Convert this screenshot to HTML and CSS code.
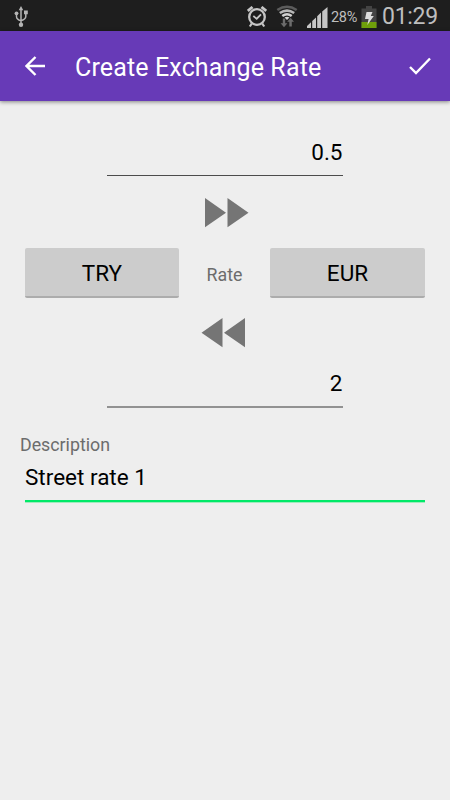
FILE: index.html
```
<!DOCTYPE html>
<html lang="en">
  <head>
    <meta charset="utf-8">
    <title>Create Exchange Rate</title>
    <link rel="stylesheet" href="styles.css">
  </head>
  <body>
    <div class="status-bar">
      <svg class="usb" width="16" height="24" viewBox="0 0 16 24">
        <path d="M7 3v17M2.500 8v2.500q0 3 4.500 4.300M11.800 7.500v3q0 2.500-4.800 4.300" fill="none" stroke="#b4b4b4" stroke-width="1.500"/>
        <path d="M7 0l2.300 4.200H4.700zM10 4.500h3.800v3.800H10z" fill="#b4b4b4"/>
        <circle cx="2.500" cy="7.300" r="1.900" fill="#b4b4b4"/>
        <circle cx="7" cy="18.800" r="2.200" fill="#b4b4b4"/>
      </svg>
      <div class="status-icons">
        <svg class="alarm" width="20" height="22" viewBox="0 0 20 22">
          <g fill="none" stroke="#c6c6c6">
            <circle cx="10" cy="11" r="7.800" stroke-width="2.300"/>
            <path d="M6.300 10l3.400 2.700 4.300-4.400" stroke-width="1.800"/>
            <path d="M.800 5L5.500 1M14.500 1l4.700 4" stroke-width="2.800"/>
            <path d="M4.800 17.500L2.800 20.500M15.200 17.500l2 3" stroke-width="2.200"/>
          </g>
        </svg>
        <svg class="wifi" width="22" height="24" viewBox="0 0 22 24">
          <g fill="none">
            <path d="M1.300 5Q11-1.500 20.700 5" stroke="#5c5c5c" stroke-width="2.600"/>
            <path d="M3.800 8Q11 3.200 18.200 8" stroke="#b8b8b8" stroke-width="2.600"/>
            <path d="M6.300 11Q11 7.400 15.700 11" stroke="#d2d2d2" stroke-width="2.400"/>
          </g>
          <path d="M8.500 12.500Q11 10.800 13.500 12.500L11 15z" fill="#d2d2d2"/>
          <path d="M6.800 13.500h2.400v4.700h2.200L8 22.300l-3.400-4.100h2.200zM13.300 21.500v-4.700h-2.100l3.400-4.100 3.400 4.100h-2.200v4.700z" fill="#6c6c6c"/>
        </svg>
        <svg class="signal" width="21" height="21" viewBox="0 0 21 21">
          <path d="M0 21v-2l4-3.700V21zM5.200 21v-7L9 10.500V21zM10.200 21V9.300L14 5.500V21zM15.200 21V4.500L20.500 0v21z" fill="#c6c6c6"/>
        </svg>
        <span class="percent">28%</span>
        <svg class="battery" width="16" height="22" viewBox="0 0 16 22">
          <path d="M5 0h6v2.500h4.500V22H.500V2.500H5z" fill="#444"/>
          <path d="M.500 16h15v6H.500z" fill="#6fa00a"/>
          <path d="M5.500 6h6l-1.700 4h3L6.300 19l1.300-6H4z" fill="#ddd"/>
        </svg>
        <span class="clock">01:29</span>
      </div>
    </div>

    <div class="app-bar">
      <svg class="back" width="20" height="20" viewBox="0 0 20 20">
        <path d="M20 10H2M10.500 1L1.500 10l9 9" fill="none" stroke="#fff" stroke-width="2.400"/>
      </svg>
      <h1 class="title">Create Exchange Rate</h1>
      <svg class="done" width="22" height="18" viewBox="0 0 22 18">
        <path d="M1 10l6 6L21 1.500" fill="none" stroke="#fff" stroke-width="2.400"/>
      </svg>
    </div>

    <div class="form">
      <div class="amount">0.5</div>
      <svg class="forward" width="44" height="30" viewBox="0 0 44 30">
        <path d="M0 0l21 14.700L0 29.300zM22.500 0l21 14.700-21 14.600z" fill="#757575"/>
      </svg>
      <div class="currencies">
        <button class="currency">TRY</button>
        <span class="rate">Rate</span>
        <button class="currency">EUR</button>
      </div>
      <svg class="rewind" width="44" height="30" viewBox="0 0 44 30">
        <path d="M21.500 0v29.300L.500 14.700zM44 0v29.300L23 14.700z" fill="#757575"/>
      </svg>
      <div class="amount second">2</div>
      <div class="label">Description</div>
      <div class="description">Street rate 1</div>
    </div>
  </body>
</html>
```
FILE: styles.css
```
body {
  margin: 0;
  min-height: 800px;
  background: #eee;
  color: #000;
  font-family: Roboto, sans-serif;
}
svg {
  display: block;
  flex: none;
}

.status-bar {
  height: 31px;
  display: flex;
  justify-content: space-between;
  background: #1e1e1e;
  color: #bebebe;
}
.usb {
  margin: 6px 0 0 14px;
}
.status-icons {
  display: flex;
  padding-right: 12px;
}
.alarm {
  margin-top: 6px;
}
.wifi {
  margin: 5px 0 0 9px;
}
.signal {
  margin: 7px 0 0 9px;
}
.percent {
  width: 28px;
  margin-left: 3px;
  font-size: 14.5px;
  line-height: 35px;
  letter-spacing: -0.3px;
  white-space: nowrap;
}
.battery {
  margin: 6px 0 0 2px;
}
.clock {
  width: 56px;
  margin-left: 5px;
  font-size: 23px;
  line-height: 34px;
  letter-spacing: -0.3px;
  white-space: nowrap;
}

.app-bar {
  height: 70px;
  display: flex;
  align-items: center;
  padding: 0 19px 0 25px;
  background: #673ab7;
  box-shadow: 0 1px 4px rgba(0, 0, 0, 0.45);
}
.title {
  flex: 1;
  margin: 2px 0 0 30px;
  color: #fff;
  font-size: 25px;
  font-weight: 400;
  letter-spacing: 0.14px;
  white-space: nowrap;
}

.form {
  display: flex;
  flex-direction: column;
  padding: 28px 25px 0;
}
.amount {
  box-sizing: border-box;
  width: 235.5px;
  height: 47px;
  margin-left: 82px;
  border-bottom: 1px solid #4c4c4c;
  font-size: 22.5px;
  line-height: 47px;
  text-align: right;
}
.forward {
  margin: 22px 0 0 180px;
}
.currencies {
  display: flex;
  justify-content: space-between;
  align-items: center;
  margin-top: 20px;
}
.currency {
  width: 155px;
  height: 50px;
  padding: 2px 0 0;
  border: 0;
  border-bottom: 2px solid #acacac;
  border-radius: 2px;
  background: #ccc;
  color: #000;
  font: 22.5px Roboto, sans-serif;
}
.currency:first-child {
  width: 154px;
  margin-right: 1px;
}
.rate {
  margin: 3px 1px 0 0;
}
.rate,
.label {
  color: #6c6c6c;
  font-size: 17.8px;
}
.rewind {
  margin: 20px 0 0 176px;
}
.second {
  margin-top: 12px;
  border-bottom: 2px solid #929292;
  height: 48px;
}
.label {
  margin: 26px 0 0 -5px;
  line-height: 22px;
}
.description {
  height: 44px;
  border-bottom: 2px solid #00e968;
  box-shadow: 0 1px #a0ebbd;
  font-size: 22.5px;
  line-height: 43px;
}
```
